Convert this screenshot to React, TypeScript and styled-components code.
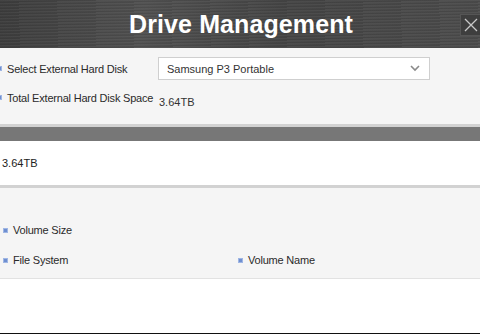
import React from "react";
import styled, { createGlobalStyle } from "styled-components";

const GlobalStyle = createGlobalStyle`
  html, body {
    margin: 0;
    padding: 0;
    background: #ffffff;
    font-family: "Liberation Sans", Arial, sans-serif;
  }
`;

const App: React.FC = () => {
  return (
    <Window>
      <GlobalStyle />
      <Header>
        <Title>Drive Management</Title>
        <CloseButton aria-label="close">
          <svg width="14" height="14" viewBox="0 0 14 14">
            <path d="M1 1 L13 13 M13 1 L1 13" stroke="#c8c8c8" strokeWidth="1.3" />
          </svg>
        </CloseButton>
      </Header>

      <InfoSection>
        <Row>
          <Label $edge>Select External Hard Disk</Label>
          <Select>
            <span>Samsung P3 Portable</span>
            <svg width="10" height="7" viewBox="0 0 10 7">
              <path d="M1 1 L5 5 L9 1" stroke="#8a8a8a" strokeWidth="1.6" fill="none" />
            </svg>
          </Select>
        </Row>
        <Row>
          <Label $edge>Total External Hard Disk Space</Label>
          <Value>3.64TB</Value>
        </Row>
      </InfoSection>

      <Divider />
      <DarkBar />
      <CapacityRow>3.64TB</CapacityRow>
      <Divider />

      <VolumeSection>
        <Label>Volume Size</Label>
        <VolumeGrid>
          <Label>File System</Label>
          <Label>Volume Name</Label>
        </VolumeGrid>
      </VolumeSection>

      <Footer />
      <BottomEdge />
    </Window>
  );
};

const Window = styled.div`
  width: 480px;
  height: 334px;
  display: flex;
  flex-direction: column;
  overflow: hidden;
  background: #ffffff;
`;

const Header = styled.div`
  height: 48px;
  flex-shrink: 0;
  display: flex;
  align-items: center;
  justify-content: center;
  position: relative;
  background:
    repeating-linear-gradient(
      178.5deg,
      rgba(255, 255, 255, 0.04) 0px,
      rgba(255, 255, 255, 0.04) 1px,
      rgba(0, 0, 0, 0.05) 2px,
      rgba(0, 0, 0, 0.05) 3px
    ),
    linear-gradient(100deg, #3c3c3c 0%, #505050 30%, #444444 60%, #4c4c4c 100%);
`;

const Title = styled.h1`
  margin: 0 0 0 2px;
  color: #ffffff;
  font-size: 25px;
  font-weight: bold;
  letter-spacing: 0.1px;
`;

const CloseButton = styled.div`
  position: absolute;
  right: -2px;
  top: 14px;
  width: 22px;
  height: 22px;
  display: flex;
  align-items: center;
  justify-content: center;
  background: #3e3e3e;
  border: 1px solid #555555;
  box-sizing: border-box;
`;

const InfoSection = styled.div`
  height: 76px;
  flex-shrink: 0;
  background: #f5f5f5;
  padding-top: 9px;
  box-sizing: border-box;
`;

const Row = styled.div`
  display: grid;
  grid-template-columns: 158px 1fr;
  align-items: center;
  height: 23px;
  margin-bottom: 6px;
`;

const Label = styled.div<{ $edge?: boolean }>`
  display: flex;
  align-items: center;
  white-space: nowrap;
  font-size: 11px;
  letter-spacing: -0.2px;
  color: #2a2a2a;
  padding-left: ${(p) => (p.$edge ? "0" : "3px")};

  &::before {
    content: "";
    flex-shrink: 0;
    width: 5px;
    height: 5px;
    margin-left: ${(p) => (p.$edge ? "-3px" : "0")};
    margin-right: 5px;
    background: #6f8fd0;
    border: 1px solid #9fb6e4;
    box-sizing: border-box;
  }
`;

const Select = styled.div`
  width: 272px;
  height: 23px;
  box-sizing: border-box;
  border: 1px solid #cfcfcf;
  background: #ffffff;
  display: flex;
  align-items: center;
  justify-content: space-between;
  padding: 0 9px 0 8px;
  font-size: 11px;
  color: #333333;
`;

const Value = styled.div`
  font-size: 11px;
  color: #333333;
  padding: 8px 0 0 1px;
`;

const Divider = styled.div`
  height: 3px;
  flex-shrink: 0;
  background: #d2d2d2;
`;

const DarkBar = styled.div`
  height: 14px;
  flex-shrink: 0;
  background: #777777;
`;

const CapacityRow = styled.div`
  height: 44px;
  flex-shrink: 0;
  display: flex;
  align-items: center;
  padding-left: 2px;
  font-size: 11px;
  color: #222222;
  background: #ffffff;
`;

const VolumeSection = styled.div`
  height: 91px;
  flex-shrink: 0;
  box-sizing: border-box;
  background: #f5f5f5;
  border-bottom: 1px solid #e2e2e2;
  padding-top: 36px;
  display: flex;
  flex-direction: column;
  gap: 18px;
`;

const VolumeGrid = styled.div`
  display: grid;
  grid-template-columns: 235px 1fr;
`;

const Footer = styled.div`
  flex: 1;
  background: #ffffff;
`;

const BottomEdge = styled.div`
  height: 1px;
  flex-shrink: 0;
  background: #111111;
`;

export default App;
